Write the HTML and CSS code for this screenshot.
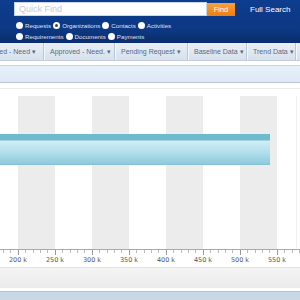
FILE: index.html
```html
<!DOCTYPE html>
<html>
	<head>
		<meta charset="UTF-8">
		<title>Dashboard</title>
		<link rel="stylesheet" href="styles.css">
	</head>
	<body>
		<div class="header">
			<div class="search">
				<input type="text" class="find_input" placeholder="Quick Find"/>
				<button class="find_btn">Find</button>
				<a class="full_search">Full Search</a>
			</div>
			<div class="radios">
				<span class="opt"><i class="dot"></i>Requests</span>
				<span class="opt"><i class="dot on"></i>Organizations</span>
				<span class="opt"><i class="dot"></i>Contacts</span>
				<span class="opt"><i class="dot"></i>Activities</span>
			</div>
			<div class="radios">
				<span class="opt"><i class="dot"></i>Requirements</span>
				<span class="opt"><i class="dot"></i>Documents</span>
				<span class="opt"><i class="dot"></i>Payments</span>
			</div>
		</div>
		<div class="tabs">
			<div class="tab first">Requested - Need &#9662;</div>
			<div class="tab t2">Approved - Need. &#9662;</div>
			<div class="tab t3">Pending Request &#9662;</div>
			<div class="tab t4">Baseline Data &#9662;</div>
			<div class="tab t5">Trend Data &#9662;</div>
		</div>
		<div class="filter_bar"></div>
		<div class="gap"></div>
		<div class="plot">
			<div class="col shade"></div>
			<div class="col"></div>
			<div class="col shade"></div>
			<div class="col"></div>
			<div class="col shade"></div>
			<div class="col"></div>
			<div class="col shade"></div>
			<div class="col last"></div>
			<div class="bar"></div>
		</div>
		<div class="axis">
			<span class="lbl" style="left:18px">200 k</span>
			<span class="lbl" style="left:55px">250 k</span>
			<span class="lbl" style="left:92px">300 k</span>
			<span class="lbl" style="left:129px">350 k</span>
			<span class="lbl" style="left:166px">400 k</span>
			<span class="lbl" style="left:203px">450 k</span>
			<span class="lbl" style="left:240px">500 k</span>
			<span class="lbl" style="left:277px">550 k</span>
		</div>
		<div class="footer_bar"></div>
		<div class="gap_small"></div>
		<div class="bottom_bar"></div>
	</body>
</html>
```
FILE: styles.css
```css
body{
	margin: 0;
	width: 300px;
	height: 300px;
	overflow: hidden;
	font-family: "Liberation Sans", Arial, sans-serif;
	background: #fff;
}
.header{
	height: 43px;
	background: linear-gradient(#0d3d8e, #0c3883 70%, #0a2d6c);
	box-sizing: border-box;
	padding: 2px 0 0 14px;
}
.search{
	display: flex;
	align-items: center;
	height: 14px;
}
.find_input{
	width: 193px;
	height: 14px;
	box-sizing: border-box;
	border: 1px solid #c9d6ea;
	padding: 0 4px;
	font: 9px "Liberation Sans", Arial, sans-serif;
	outline: none;
}
.find_input::placeholder{ color: #c2cad6; }
.find_btn{
	width: 28px;
	height: 13px;
	border: 0;
	padding: 0;
	background: linear-gradient(#f7a040, #ec8010);
	color: #fff;
	font: 7.5px "Liberation Sans", Arial, sans-serif;
}
.full_search{
	margin-left: 15px;
	color: #fff;
	font-size: 8px;
}
.radios{
	display: flex;
	height: 11px;
	align-items: center;
	margin-left: 2px;
	font-size: 6.2px;
	color: #d8e4f6;
}
.search + .radios{ margin-top: 4px; }
.opt{
	display: flex;
	align-items: center;
	margin-right: 2px;
}
.dot{
	width: 7px;
	height: 7px;
	border-radius: 50%;
	background: #fff;
	margin-right: 2px;
	box-sizing: border-box;
}
.dot.on{
	border: 2px solid #fff;
	background: #445;
}
.tabs{
	display: flex;
	height: 18px;
	background: linear-gradient(#e9eff6, #d6e1ed);
	border-bottom: 1px solid #c4cfdb;
	box-sizing: border-box;
	font-size: 7px;
	color: #5a6b80;
}
.tab{
	display: flex;
	align-items: center;
	white-space: nowrap;
	overflow: hidden;
	border-right: 1px solid #b9c6d4;
	box-shadow: 1px 0 0 #f4f7fb;
	box-sizing: border-box;
	padding-left: 6px;
}
.tab.first{ width: 44px; justify-content: flex-end; padding: 0 7px 0 0; }
.t2{ width: 71px; }
.t3{ width: 73px; }
.t4{ width: 59px; }
.t5{ width: 49px; }
.filter_bar{
	height: 18px;
	margin-top: 4px;
	background: linear-gradient(#e8f1f9, #dde9f4);
	border-top: 1px solid #c8d4e0;
	border-bottom: 1px solid #b9c5d1;
	box-sizing: border-box;
}
.gap{
	height: 13px;
	box-sizing: border-box;
	padding-top: 5px;
}
.gap::after{
	content: "";
	display: block;
	height: 1px;
	background: #ececec;
}
.plot{
	position: relative;
	display: flex;
	height: 153px;
	padding-left: 18px;
}
.col{ width: 37px; }
.col.last{ width: 19px; border-right: 1px solid #f0f0f0; }
.shade{ background: #ececec; }
.bar{
	position: absolute;
	left: 0;
	top: 38px;
	width: 270px;
	height: 31px;
	background: linear-gradient(#6fbacd, #6fbacd 6px, #d2edf5 7px, #a9dbe9 70%, #8dcadd);
	border-bottom: 1px solid #84c0d2;
	box-sizing: border-box;
}
.axis{
	position: relative;
	height: 18px;
	border-top: 1px solid #a9a9a9;
	box-sizing: border-box;
	background:
		repeating-linear-gradient(90deg, #999 0 1px, transparent 1px 37px) 18px 0 / 100% 5px no-repeat,
		repeating-linear-gradient(90deg, #bbb 0 1px, transparent 1px 7.4px) 3.2px 0 / 100% 3px no-repeat;
}
.lbl{
	position: absolute;
	top: 6px;
	transform: translateX(-50%);
	font-family: "DejaVu Sans", sans-serif;
	font-size: 6.5px;
	color: #555;
	white-space: nowrap;
}
.footer_bar{
	height: 21px;
	background: linear-gradient(#f4f4f4, #ebebeb);
	border-top: 1px solid #e2e2e2;
	box-sizing: border-box;
}
.gap_small{ height: 3px; }
.bottom_bar{
	height: 9px;
	background: #c9d8e6;
	border-top: 1px solid #b5c6d6;
	box-sizing: border-box;
}
```
